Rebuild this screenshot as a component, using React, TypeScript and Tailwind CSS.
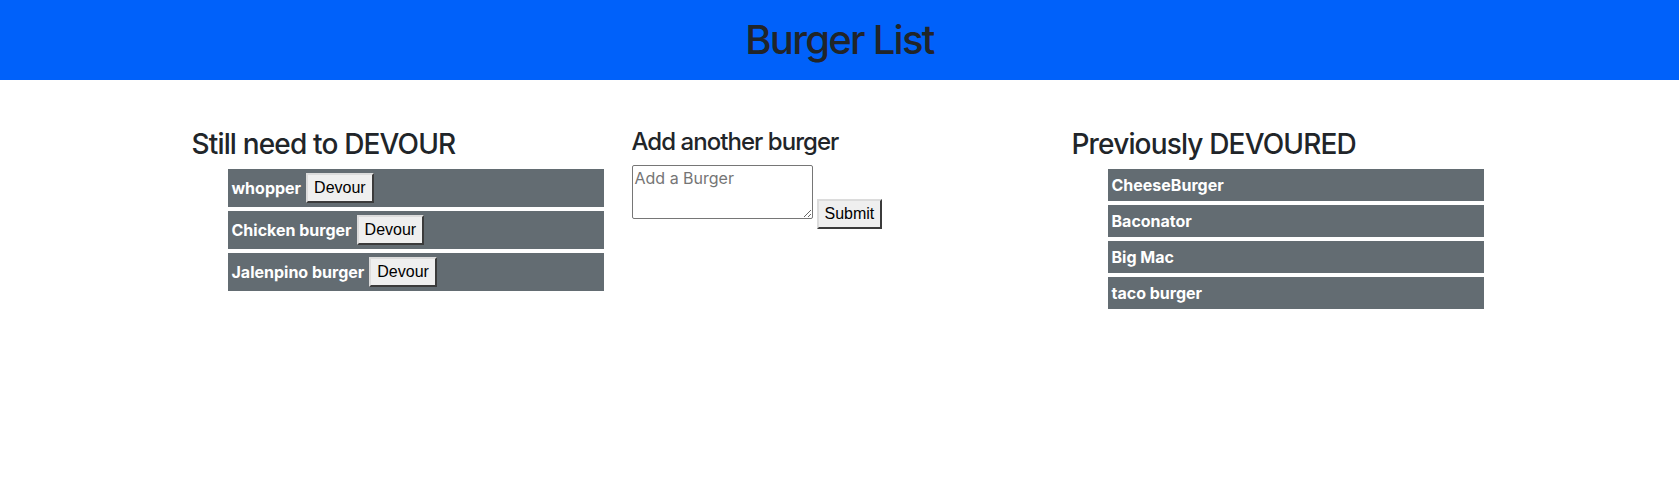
const FONT = "font-['Inter','Liberation_Sans',sans-serif]";

const toEat = ['whopper', 'Chicken burger', 'Jalenpino burger'];
const eaten = ['CheeseBurger', 'Baconator', 'Big Mac', 'taco burger'];

const btn =
  "inline-block h-[30px] px-[6px] bg-[#efefef] text-black text-[16px] leading-[24px] font-['Liberation_Sans',Arial,sans-serif] border-2 border-solid border-t-[#dcdcdc] border-l-[#dcdcdc] border-b-[#3b3b3b] border-r-[#3b3b3b]";

export default function App() {
  return (
    <div className={`${FONT} min-h-[479px] bg-white text-[#212529]`}>
      <div className="h-[80px] bg-[#0061fa] flex items-center justify-center">
        <h1 className="text-[40px] leading-[1.2] font-medium tracking-[-0.043em]">Burger List</h1>
      </div>

      <div className="w-[1320px] mx-auto grid grid-cols-3 pt-12">
        <div className="px-3">
          <h3 className="text-[28px] leading-[1.2] font-medium tracking-[-0.03em] mb-[7px]">Still need to DEVOUR</h3>
          <ul className="ml-[36px] w-[376px] flex flex-col gap-[4px]">
            {toEat.map(name => (
              <li key={name} className="h-[38px] bg-[#636c72] pl-[4px] flex items-center gap-[5px]">
                <span className="text-white font-bold text-[16px]">{name}</span>
                <button className={btn}>Devour</button>
              </li>
            ))}
          </ul>
        </div>

        <div className="px-3">
          <h4 className="text-[24px] leading-[1.2] font-medium tracking-[-0.04em] mb-2">Add another burger</h4>
          <div className="flex items-end gap-[4px]">
            <textarea
              placeholder="Add a Burger"
              className="w-[181px] h-[54px] border border-[#767676] rounded-[2px] px-[2px] py-0 text-[16px] leading-[24px] placeholder:text-[#757575] resize-y"
            />
            <button className={`${btn} translate-y-[10px]`}>Submit</button>
          </div>
        </div>

        <div className="px-3">
          <h3 className="text-[28px] leading-[1.2] font-medium tracking-[-0.03em] mb-[7px]">Previously DEVOURED</h3>
          <ul className="ml-[36px] w-[376px] flex flex-col gap-[4px]">
            {eaten.map(name => (
              <li key={name} className="h-[32px] bg-[#636c72] pl-[4px] flex items-center">
                <span className="text-white font-bold text-[16px]">{name}</span>
              </li>
            ))}
          </ul>
        </div>
      </div>
    </div>
  );
}
